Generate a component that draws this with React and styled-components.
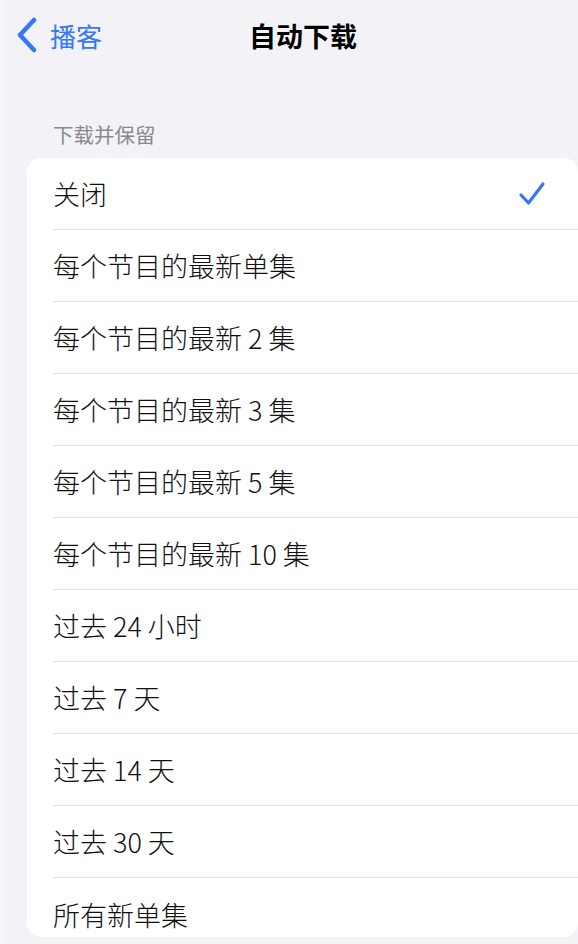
import React from 'react';
import styled, { createGlobalStyle } from 'styled-components';

const GlobalStyle = createGlobalStyle`
  html, body {
    margin: 0;
    padding: 0;
    background: #f2f2f7;
  }
  body {
    font-family: "Noto Sans CJK SC", "Noto Sans", sans-serif;
    -webkit-font-smoothing: antialiased;
  }
`;

const Page = styled.div`
  width: 578px;
  height: 944px;
  overflow: hidden;
  background: #f2f2f7;
  box-sizing: border-box;
  border-left: 3px solid #f7f7fa;
`;

const NavBar = styled.div`
  height: 70px;
  display: grid;
  grid-template-columns: 1fr auto 1fr;
  align-items: center;
  padding-left: 13px;
`;

const BackButton = styled.div`
  display: flex;
  align-items: center;
  gap: 12px;
  color: #3478f6;
  font-size: 26px;
`;

const Title = styled.div`
  font-size: 27px;
  font-weight: 700;
  color: #000;
  margin-left: 12px;
`;

const SectionHeader = styled.div`
  padding: 50px 0 0 50px;
  height: 38px;
  font-size: 20.5px;
  color: #8a8a8e;
  line-height: 28px;
`;

const Card = styled.div`
  margin-left: 24px;
  background: #fff;
  border-radius: 14px;
  overflow: hidden;
`;

const Row = styled.div`
  height: ${(p) => (p.$last ? 59 : 72)}px;
  margin-left: 26px;
  padding-right: 32px;
  padding-top: ${(p) => (p.$last ? 14 : 0)}px;
  display: flex;
  align-items: center;
  justify-content: space-between;
  border-bottom: ${(p) => (p.$last ? 'none' : '1.5px solid #e3e3e7')};
  box-sizing: border-box;
  font-size: 27px;
  font-weight: 300;
  color: #111;
`;

const Chevron = () => (
  <svg width="22" height="36" viewBox="0 0 22 36">
    <path d="M18 3 L4 18 L18 33" fill="none" stroke="#3478f6" strokeWidth="4.5" strokeLinecap="round" strokeLinejoin="round" />
  </svg>
);

const Check = () => (
  <svg width="28" height="26" viewBox="0 0 28 26">
    <path d="M3 14 L10.5 22 L25 3" fill="none" stroke="#3478f6" strokeWidth="3.2" strokeLinecap="round" strokeLinejoin="round" />
  </svg>
);

const options = [
  '关闭',
  '每个节目的最新单集',
  '每个节目的最新 2 集',
  '每个节目的最新 3 集',
  '每个节目的最新 5 集',
  '每个节目的最新 10 集',
  '过去 24 小时',
  '过去 7 天',
  '过去 14 天',
  '过去 30 天',
  '所有新单集',
];

export default function App() {
  return (
    <Page>
      <GlobalStyle />
      <NavBar>
        <BackButton>
          <Chevron />
          <span>播客</span>
        </BackButton>
        <Title>自动下载</Title>
        <div />
      </NavBar>
      <SectionHeader>下载并保留</SectionHeader>
      <Card>
        {options.map((o, i) => (
          <Row key={o} $last={i === options.length - 1}>
            <span>{o}</span>
            {i === 0 && <Check />}
          </Row>
        ))}
      </Card>
    </Page>
  );
}
